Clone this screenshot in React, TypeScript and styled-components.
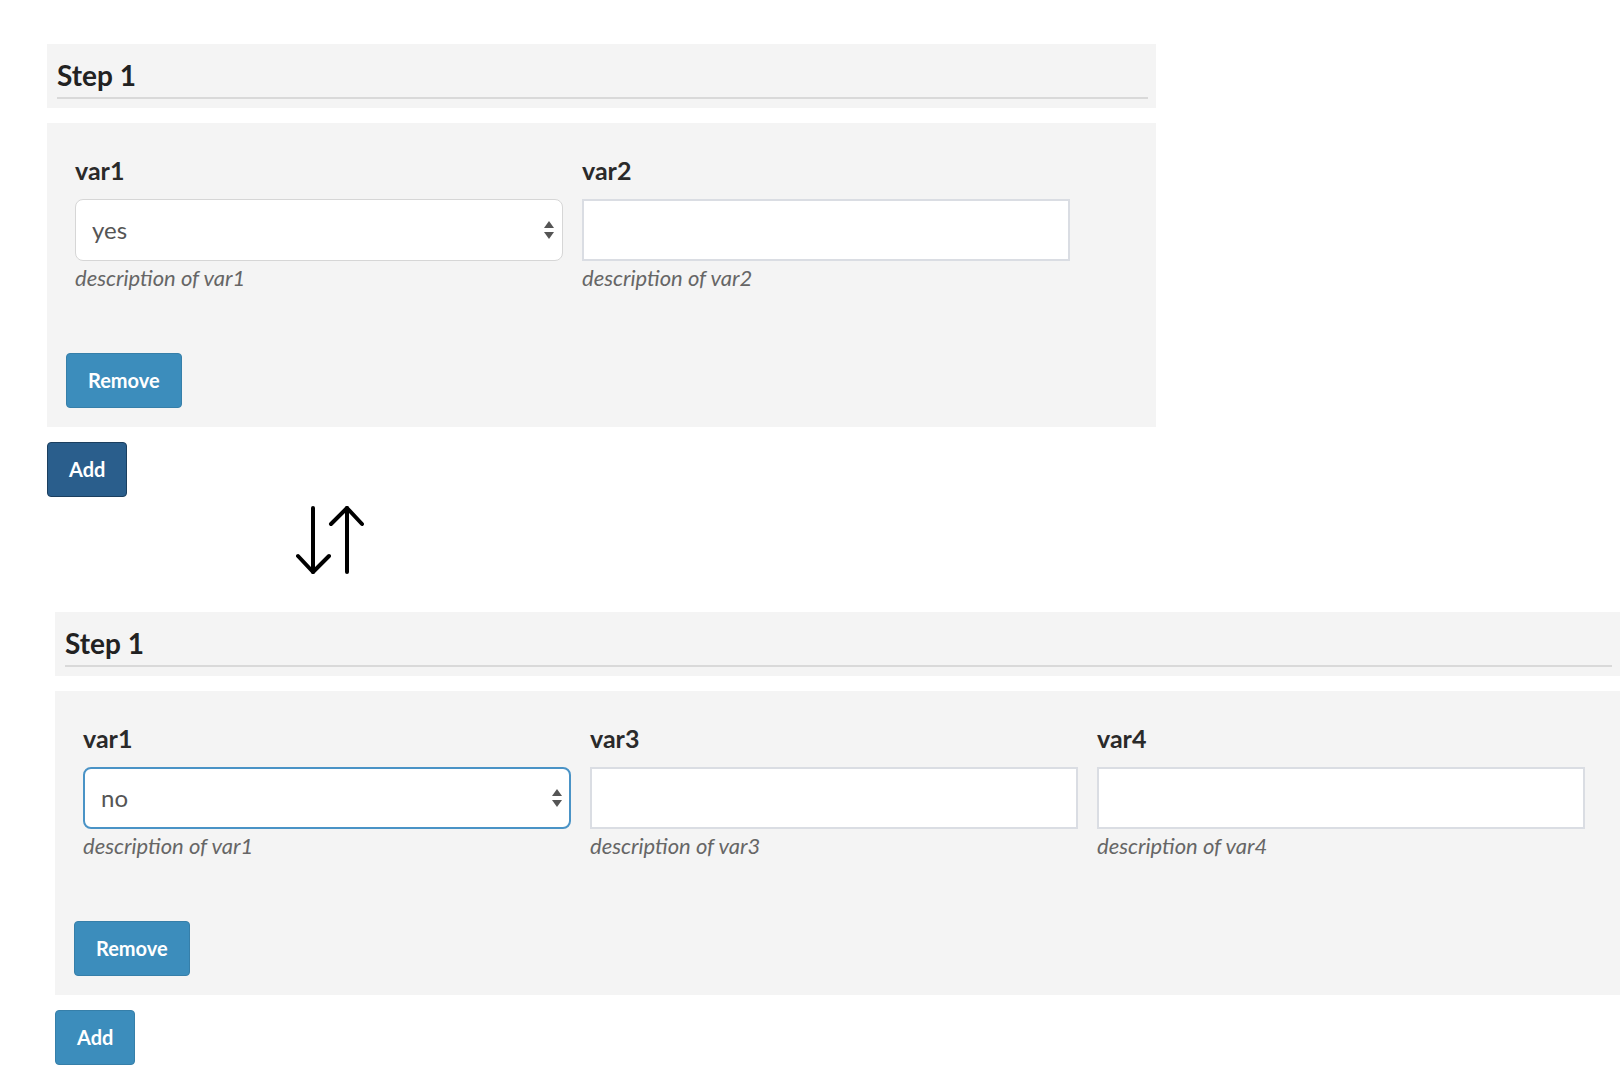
import styled, { createGlobalStyle } from "styled-components";

const GlobalStyle = createGlobalStyle`
  html, body {
    margin: 0;
    padding: 0;
    background: #fff;
  }
  body {
    font-family: Lato, "Open Sans", sans-serif;
    color: #333;
    width: 1620px;
    height: 1074px;
    overflow: hidden;
  }
`;

const Page = styled.main`
  display: flex;
  flex-direction: column;
  padding-top: 44px;
`;

const Section = styled.section<{ $indent: number; $width?: number }>`
  display: flex;
  flex-direction: column;
  align-items: flex-start;
  margin-left: ${({ $indent }) => $indent}px;
  width: ${({ $width }) => ($width ? `${$width}px` : "auto")};
`;

const StepHeader = styled.div`
  align-self: stretch;
  background: #f4f4f4;
  padding: 15px 8px 9px 10px;
`;

const StepTitle = styled.h3`
  margin: 0;
  padding-bottom: 4px;
  font-size: 28px;
  font-weight: 700;
  line-height: 1.2;
  color: #222;
  border-bottom: 2px solid #d9d9d9;
`;

const StepBody = styled.div`
  align-self: stretch;
  margin-top: 15px;
  padding: 32px 28px 19px;
  background: #f4f4f4;
`;

const Fields = styled.div<{ $cols: number }>`
  display: grid;
  grid-template-columns: repeat(${({ $cols }) => $cols}, 488px);
  column-gap: 19px;
`;

const Field = styled.div`
  display: flex;
  flex-direction: column;
`;

const Label = styled.label`
  margin-bottom: 14px;
  font-size: 25px;
  font-weight: 700;
  line-height: 1.2;
  color: #2a2a2a;
`;

const SelectWrap = styled.div`
  position: relative;
`;

const Select = styled.select<{ $focused?: boolean }>`
  appearance: none;
  box-sizing: border-box;
  width: 100%;
  height: 62px;
  padding: 0 40px 0 16px;
  font-family: inherit;
  font-size: 24px;
  color: #555;
  background: #fff;
  border-radius: 8px;
  border: ${({ $focused }) => ($focused ? "2px solid #4a93c6" : "1.5px solid #d6d6d6")};
  outline: none;
`;

const SelectArrows = styled.svg`
  position: absolute;
  right: 8px;
  top: 50%;
  transform: translateY(-50%);
  pointer-events: none;
`;

const TextInput = styled.input`
  box-sizing: border-box;
  width: 100%;
  height: 62px;
  padding: 0 16px;
  font-family: inherit;
  font-size: 24px;
  background: #fff;
  border: 2px solid #dadde3;
  border-radius: 0;
  outline: none;
`;

const Help = styled.span`
  margin-top: 4px;
  font-size: 22px;
  font-style: italic;
  line-height: 1.2;
  color: #666;
`;

const Actions = styled.div`
  margin: 62px 0 0 -9px;
`;

const Button = styled.button<{ $tone?: "primary" | "dark" }>`
  height: 55px;
  padding: 0 21px;
  font-family: inherit;
  font-size: 20px;
  font-weight: 700;
  color: #fff;
  border-radius: 4px;
  background: ${({ $tone }) => ($tone === "dark" ? "#2a5e8c" : "#3c8dbc")};
  border: 1px solid ${({ $tone }) => ($tone === "dark" ? "#1b3f5f" : "#367fa9")};
  cursor: pointer;
`;

const AddRow = styled.div`
  margin-top: 15px;
`;

const SwapIcon = styled.svg`
  margin: 9px 0 38px 296px;
`;

type FieldDef =
  | { name: string; kind: "select"; value: string; focused?: boolean }
  | { name: string; kind: "text" };

function Arrows() {
  return (
    <SelectArrows width="12" height="20" viewBox="0 0 12 20">
      <path d="M6 1 L11 8 L1 8 Z" fill="#555" />
      <path d="M6 19 L11 12 L1 12 Z" fill="#555" />
    </SelectArrows>
  );
}

function Step({
  indent,
  width,
  fields,
  addTone,
}: {
  indent: number;
  width?: number;
  fields: FieldDef[];
  addTone: "primary" | "dark";
}) {
  return (
    <Section $indent={indent} $width={width}>
      <StepHeader>
        <StepTitle>Step 1</StepTitle>
      </StepHeader>
      <StepBody>
        <Fields $cols={fields.length}>
          {fields.map((f) => (
            <Field key={f.name}>
              <Label>{f.name}</Label>
              {f.kind === "select" ? (
                <SelectWrap>
                  <Select defaultValue={f.value} $focused={f.focused}>
                    <option value="yes">yes</option>
                    <option value="no">no</option>
                  </Select>
                  <Arrows />
                </SelectWrap>
              ) : (
                <TextInput type="text" />
              )}
              <Help>description of {f.name}</Help>
            </Field>
          ))}
        </Fields>
        <Actions>
          <Button>Remove</Button>
        </Actions>
      </StepBody>
      <AddRow>
        <Button $tone={addTone}>Add</Button>
      </AddRow>
    </Section>
  );
}

export default function App() {
  return (
    <>
      <GlobalStyle />
      <Page>
        <Step
          indent={47}
          width={1109}
          addTone="dark"
          fields={[
            { name: "var1", kind: "select", value: "yes" },
            { name: "var2", kind: "text" },
          ]}
        />
        <SwapIcon width="68" height="68" viewBox="0 0 68 68">
          <g fill="none" stroke="#000" strokeWidth="4" strokeLinecap="round" strokeLinejoin="round">
            <path d="M17 2 V66" />
            <path d="M2 50 L17 66 L33 50" />
            <path d="M51 2 V66" />
            <path d="M35 18 L51 2 L66 18" />
          </g>
        </SwapIcon>
        <Step
          indent={55}
          addTone="primary"
          fields={[
            { name: "var1", kind: "select", value: "no", focused: true },
            { name: "var3", kind: "text" },
            { name: "var4", kind: "text" },
          ]}
        />
      </Page>
    </>
  );
}
